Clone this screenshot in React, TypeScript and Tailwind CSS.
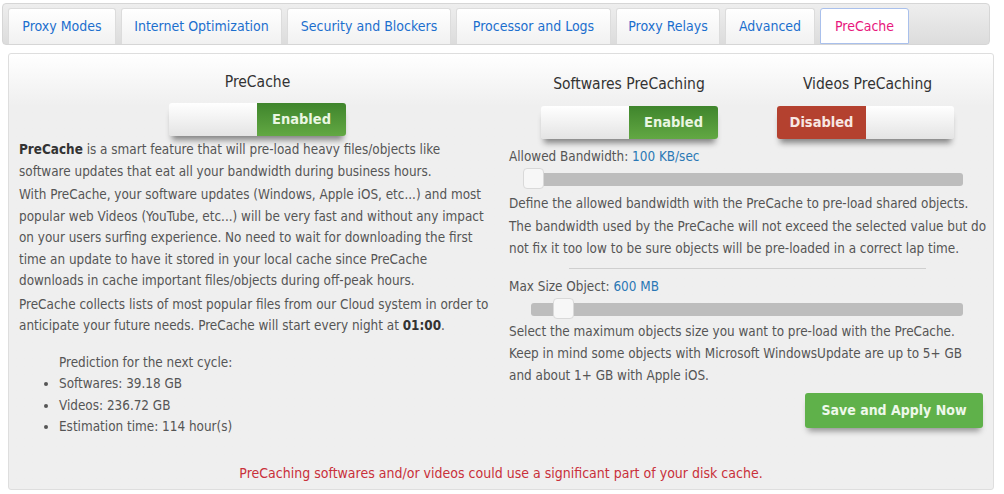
import React from 'react'

const FONT = { fontFamily: '"Liberation Sans Narrow", "DejaVu Sans Condensed", "Liberation Sans", sans-serif' }

const tabs: [string, number][] = [
  ['Proxy Modes', 108],
  ['Internet Optimization', 161],
  ['Security and Blockers', 164],
  ['Processor and Logs', 155],
  ['Proxy Relays', 104],
  ['Advanced', 90],
  ['PreCache', 89],
]

function Toggle({ on, className = '' }: { on: boolean; className?: string }) {
  return (
    <div
      className={`flex h-[33px] w-[177px] overflow-hidden rounded-[3px] shadow-[0_7px_6px_-3px_rgba(0,0,0,0.45)] ${className}`}
    >
      {on ? (
        <>
          <div className="flex-1 bg-gradient-to-b from-white to-[#e4e4e4]" />
          <div className="flex w-[89px] items-center justify-center bg-gradient-to-b from-[#3f852c] to-[#62a843] text-[14.5px] font-bold text-[#eaf6e2]">
            Enabled
          </div>
        </>
      ) : (
        <>
          <div className="flex w-[89px] items-center justify-center bg-[#b4412f] text-[14.5px] font-bold text-[#f8e7e3]">
            Disabled
          </div>
          <div className="flex-1 bg-gradient-to-b from-white to-[#e4e4e4]" />
        </>
      )}
    </div>
  )
}

function Slider({ left, className = '' }: { left: number; className?: string }) {
  return (
    <div className={`relative h-[21px] ${className}`}>
      <div className="absolute left-[22px] right-[23px] top-[5px] h-[13px] rounded-[3px] bg-[#bdbdbd]" />
      <div
        className="absolute top-0 h-[21px] w-[21px] rounded-[4px] border border-[#d9d9d9] bg-[#f7f7f7]"
        style={{ left }}
      />
    </div>
  )
}

export default function App() {
  return (
    <div className="h-[494px] w-[1004px] overflow-hidden bg-white text-[13.4px] text-[#555]" style={FONT}>
      {/* Tabs */}
      <div className="ml-[2px] mt-[3px] flex h-[42px] w-[988px] items-end gap-[5px] rounded-[4px] border border-[#d6d6d6] bg-gradient-to-b from-[#eeeeee] to-[#dcdcdc] pl-[5px]">
        {tabs.map(([t, w]) => {
          const active = t === 'PreCache'
          return (
            <div
              key={t}
              style={{ width: w }}
              className={`flex h-[36px] items-center justify-center rounded-t-[3px] border text-[14px] ${
                active
                  ? 'border-[#a9c0ec] bg-white text-[#e8177d]'
                  : 'border-[#dcdcdc] border-b-0 bg-gradient-to-b from-white to-[#f1f1f1] text-[#1c6fce]'
              }`}
            >
              {t}
            </div>
          )
        })}
      </div>

      {/* Panel */}
      <div className="ml-[8px] mt-[8px] flex h-[437px] w-[986px] flex-col rounded-[3px] border border-[#dedede] bg-gradient-to-b from-white from-0% to-[#efefef] to-[12%] pl-[10px] pr-[2px]">
        <div className="flex gap-[13px]">
          {/* Left */}
          <div className="w-[477px] shrink-0">
            <div className="mt-[16px] text-center text-[15.5px] leading-[24px] text-[#333]">PreCache</div>
            <Toggle on className="ml-[150px] mt-[9px]" />
            <div className="mt-[3px] whitespace-nowrap leading-[21.5px]">
              <p>
                <b className="text-[#333]">PreCache</b> is a smart feature that will pre-load heavy files/objects like
                <br />
                software updates that eat all your bandwidth during business hours.
              </p>
              <p className="mt-[2px]">
                With PreCache, your software updates (Windows, Apple iOS, etc...) and most
                <br />
                popular web Videos (YouTube, etc...) will be very fast and without any impact
                <br />
                on your users surfing experience. No need to wait for downloading the first
                <br />
                time an update to have it stored in your local cache since PreCache
                <br />
                downloads in cache important files/objects during off-peak hours.
              </p>
              <p className="mt-[2px]">
                PreCache collects lists of most popular files from our Cloud system in order to
                <br />
                anticipate your future needs. PreCache will start every night at <b className="text-[#333]">01:00</b>.
              </p>
              <div className="mt-[15px] pl-[40px]">Prediction for the next cycle:</div>
              <ul className="list-disc pl-[40px]">
                <li>Softwares: 39.18 GB</li>
                <li>Videos: 236.72 GB</li>
                <li>Estimation time: 114 hour(s)</li>
              </ul>
            </div>
          </div>

          {/* Right */}
          <div className="w-[484px] shrink-0">
            <div className="mt-[18px] flex">
              <div className="w-[240px]">
                <div className="text-center text-[15.5px] leading-[24px] text-[#333]">Softwares PreCaching</div>
                <Toggle on className="ml-[32px] mt-[10px]" />
              </div>
              <div className="w-[237px]">
                <div className="text-center text-[15.5px] leading-[24px] text-[#333]">Videos PreCaching</div>
                <Toggle on={false} className="ml-[28px] mt-[10px]" />
              </div>
            </div>
            <div className="w-[477px]">
              <div className="mt-[7px] leading-[21.5px]">
                Allowed Bandwidth: <span className="text-[#2a78b5]">100 KB/sec</span>
              </div>
              <Slider left={14} />
              <div className="whitespace-nowrap leading-[21.5px]">
                <p className="mt-[4px]">Define the allowed bandwidth with the PreCache to pre-load shared objects.</p>
                <p className="mt-[2px]">
                  The bandwidth used by the PreCache will not exceed the selected value but do
                  <br />
                  not fix it too low to be sure objects will be pre-loaded in a correct lap time.
                </p>
              </div>
              <div className="ml-[60px] mt-[9px] h-px w-[357px] bg-[#cfcfcf]" />
              <div className="mt-[7px] leading-[21.5px]">
                Max Size Object: <span className="text-[#2a78b5]">600 MB</span>
              </div>
              <Slider left={44} />
              <div className="whitespace-nowrap leading-[21.5px]">
                <p className="mt-[2px]">Select the maximum objects size you want to pre-load with the PreCache.</p>
                <p className="mt-[1px]">
                  Keep in mind some objects with Microsoft WindowsUpdate are up to 5+ GB
                  <br />
                  and about 1+ GB with Apple iOS.
                </p>
              </div>
              <div className="mt-[7px] flex justify-end">
                <button className="mr-[3px] h-[35px] w-[178px] rounded-[3px] bg-[#5fb14a] text-[14px] font-bold text-[#eef8ea] shadow-[0_6px_6px_-3px_rgba(0,0,0,0.4)]">
                  Save and Apply Now
                </button>
              </div>
            </div>
          </div>
        </div>
        <div className="mt-auto pb-[5px] pr-[8px] text-center text-[14px] text-[#c9303a]">
          PreCaching softwares and/or videos could use a significant part of your disk cache.
        </div>
      </div>
    </div>
  )
}
